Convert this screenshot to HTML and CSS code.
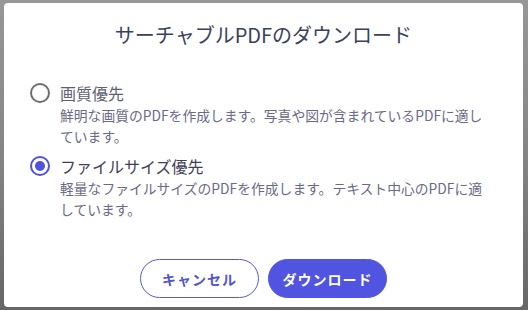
FILE: index.html
```html
<!DOCTYPE html>
<html lang="ja">
<head>
<meta charset="utf-8">
<link rel="stylesheet" href="styles.css">
</head>
<body>
<div class="dialog">
  <h1 class="title">サーチャブルPDFのダウンロード</h1>
  <div class="options">
    <label class="option">
      <span class="radio"></span>
      <span class="text">
        <span class="label label-off">画質優先</span>
        <span class="desc">鮮明な画質のPDFを作成します。写真や図が含まれているPDFに適しています。</span>
      </span>
    </label>
    <label class="option option-second">
      <span class="radio radio-on"></span>
      <span class="text">
        <span class="label">ファイルサイズ優先</span>
        <span class="desc">軽量なファイルサイズのPDFを作成します。テキスト中心のPDFに適しています。</span>
      </span>
    </label>
  </div>
  <div class="actions">
    <button class="btn btn-outline">キャンセル</button>
    <button class="btn btn-primary">ダウンロード</button>
  </div>
</div>
</body>
</html>
```
FILE: styles.css
```css
html, body {
  margin: 0;
  height: 100%;
}
body {
  background: linear-gradient(180deg, #979797 0%, #858585 50%, #666666 100%);
  padding: 3px 0 0 4px;
  box-sizing: border-box;
  font-family: "Noto Sans CJK JP", "Noto Sans", sans-serif;
}
.dialog {
  width: 519px;
  height: 304px;
  background: #ffffff;
  border-radius: 4px;
  box-sizing: border-box;
  padding: 17px 33px 0 26px;
  display: flex;
  flex-direction: column;
}
.title {
  margin: 0;
  text-align: center;
  font-size: 20px;
  line-height: 30px;
  font-weight: 400;
  color: #3b3f5e;
  padding-left: 7px;
}
.options {
  margin-top: 31px;
  display: flex;
  flex-direction: column;
  gap: 7px;
}
.option {
  display: flex;
  align-items: flex-start;
  gap: 10px;
}
.radio {
  width: 20px;
  height: 20px;
  box-sizing: border-box;
  border: 2px solid #6e6e6e;
  border-radius: 50%;
  margin-top: 2px;
  flex: none;
  position: relative;
}
.radio-on {
  border-color: #4f52e0;
}
.radio-on::after {
  content: "";
  position: absolute;
  left: 3px;
  top: 3px;
  width: 10px;
  height: 10px;
  border-radius: 50%;
  background: #4f52e0;
}
.text {
  display: flex;
  flex-direction: column;
}
.label {
  font-size: 16px;
  line-height: 24px;
  color: #3f4058;
}
.label-off {
  color: #606074;
}
.desc {
  font-size: 13.8px;
  line-height: 21px;
  color: #6a6a88;
}
.actions {
  margin-top: 39px;
  display: flex;
  justify-content: center;
  gap: 9px;
  padding-left: 7px;
}
.btn {
  width: 119px;
  height: 39px;
  border-radius: 20px;
  font-family: "Noto Sans CJK JP", "Noto Sans", sans-serif;
  font-size: 14px;
  font-weight: 700;
  letter-spacing: 1px;
  box-sizing: border-box;
  cursor: pointer;
}
.btn-outline {
  background: #ffffff;
  border: 1px solid #5558e0;
  color: #5154d6;
}
.btn-primary {
  background: #5154e0;
  border: 1px solid #5154e0;
  color: #ffffff;
}
```
